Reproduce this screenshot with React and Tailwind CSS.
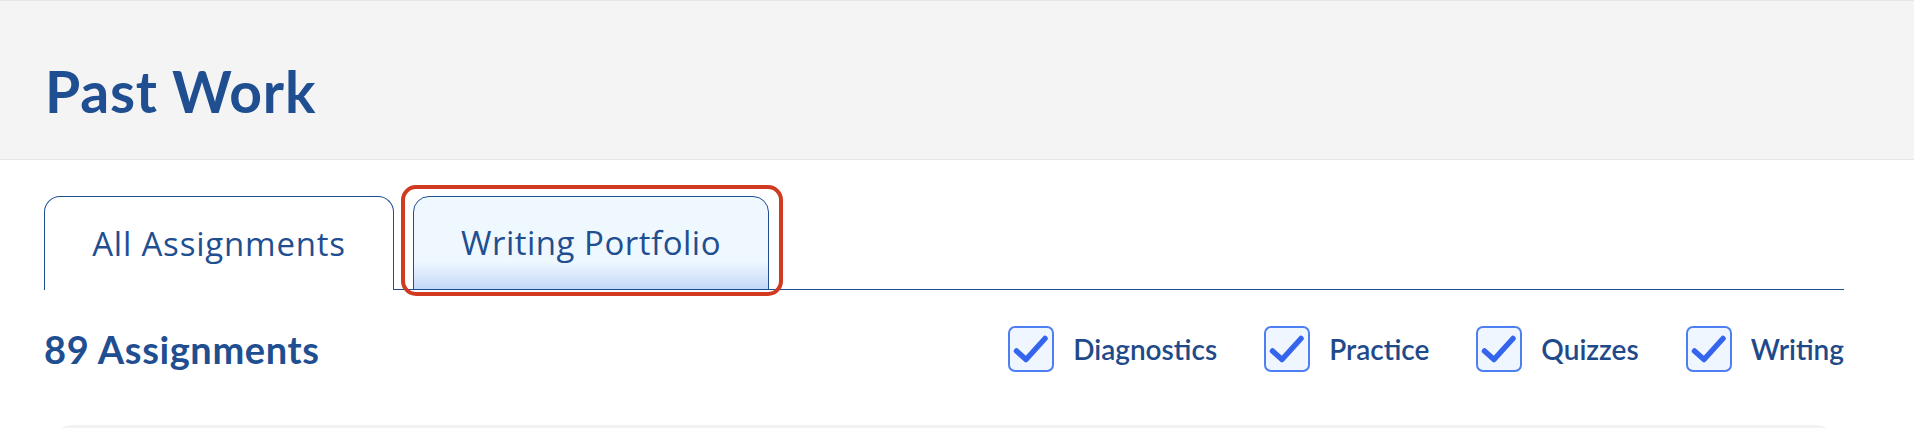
import React from 'react';

const filters = ['Diagnostics', 'Practice', 'Quizzes', 'Writing'];

const CheckBox = ({ label }) => (
  <label className="flex items-center gap-[19px]">
    <span className="w-[46px] h-[46px] rounded-[7px] border-2 border-[#4d7ff2] bg-[#eff6ff] flex items-center justify-center">
      <svg className="w-[42px] h-[42px]" viewBox="2 2 42 42" fill="none" stroke="#3465ec" strokeWidth="5.5" strokeLinecap="round" strokeLinejoin="round">
        <path d="M8.5 25l9.5 8.5L37 12.5" />
      </svg>
    </span>
    <span className="text-[28px] font-semibold text-[#1f4a8a] leading-none">{label}</span>
  </label>
);

const App = () => {
  return (
    <div className="min-h-screen bg-white font-['Lato',sans-serif] overflow-hidden">
      {/* Header */}
      <div className="h-[160px] bg-[#f4f4f4] border-t border-b border-[#e6e6e6] px-[45px] pt-[55px]">
        <h1 className="text-[57px] leading-[70px] font-bold text-[#1f4e91] tracking-[0.8px]">Past Work</h1>
      </div>

      <div className="px-[44px]">
        {/* Tabs */}
        <div className="mt-[36px] flex items-end border-b border-[#1f4e91] mr-[26px]">
          <button className="w-[350px] h-[94px] -mb-px bg-white border border-b-0 border-[#1f4e91] rounded-t-[16px] text-[33px] text-[#1f4e91] font-['Open_Sans',sans-serif] tracking-[0.8px]">
            All Assignments
          </button>
          <div className="relative ml-[19px]">
            <button className="w-[356px] h-[94px] -mb-px bg-gradient-to-b from-[#eff8ff] from-[70%] to-[#c5d7f8] border border-[#1f4e91] rounded-t-[16px] text-[33px] text-[#1f4e91] font-['Open_Sans',sans-serif] tracking-[0.5px] block">
              Writing Portfolio
            </button>
            <div className="absolute -left-[12px] -top-[11px] -right-[14px] -bottom-[7px] border-4 border-[#d03a21] rounded-[15px] pointer-events-none" />
          </div>
        </div>

        {/* Count + filters */}
        <div className="mt-[36px] flex items-center justify-between mr-[26px]">
          <h2 className="text-[38px] font-bold text-[#1f4e91] tracking-[0.6px] leading-none">89 Assignments</h2>
          <div className="flex items-center gap-[47px]">
            {filters.map((f) => (
              <CheckBox key={f} label={f} />
            ))}
          </div>
        </div>

        {/* Card */}
        <div className="mt-[53px] mx-[8px] mr-[34px] h-[200px] bg-[#f2f2f2] rounded-[20px]" />
      </div>
    </div>
  );
};

export default App;
